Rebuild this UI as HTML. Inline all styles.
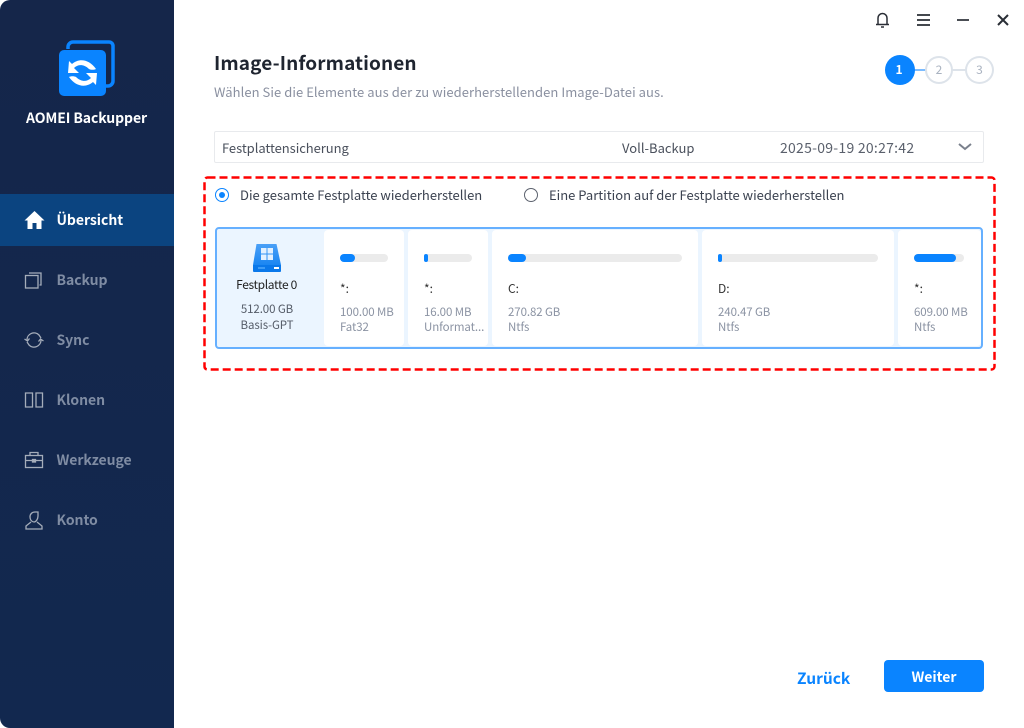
<!DOCTYPE html>
<html lang="de"><head><meta charset="utf-8"><title>AOMEI Backupper</title>
<style>
*{box-sizing:border-box;margin:0;padding:0}
html,body{width:1024px;height:728px;overflow:hidden;background:#fff}
body{position:relative;font-family:"Noto Sans CJK SC","Liberation Sans",sans-serif}
.t{position:absolute;white-space:nowrap;line-height:20px}
.a{position:absolute}
#side{position:absolute;left:0;top:0;width:174px;height:728px;background:linear-gradient(180deg,#15264a 0%,#12284f 100%);border-radius:10px 0 0 10px}
.nav{font-size:14px;font-weight:700;color:#7f8ca3;left:56.500px;letter-spacing:-.05px}
.c{position:absolute;top:230px;height:116px;background:#fff;border-radius:4px}
.b{position:absolute;top:254px;height:8px;background:#ebebeb;border-radius:4px}
.f{position:absolute;top:254px;height:8px;background:#0a84ff;border-radius:4px}
.s{font-size:11.500px;letter-spacing:-.1px;color:#8b93a3}
.k{font-size:12px;color:#333}
.g{color:#555c68;font-size:11.500px;letter-spacing:-.1px}
</style></head><body>
<div id="side"></div>
<svg class="a" style="left:56px;top:38px" width="62" height="60" viewBox="0 0 62 60">
<path d="M12 11V9a5 5 0 0 1 5-5h36a4 4 0 0 1 4 4v35a5 5 0 0 1-5 5h-2" fill="none" stroke="#0a84ff" stroke-width="3.500"/>
<rect x="3" y="12" width="47" height="46" rx="5" fill="#0a84ff"/>
<path d="M12 35 13 23l3 3c7-6 17-5 24 5-2 1-5 1-7 0-5-5-11-5-15-1l5 5z" fill="#fff"/>
<path d="M12 35 13 23l3 3c7-6 17-5 24 5-2 1-5 1-7 0-5-5-11-5-15-1l5 5z" fill="#fff" transform="rotate(180 26.500 35)"/>
</svg>
<div class="t" style="left:26px;top:108px;font-size:14px;font-weight:700;color:#fff;width:121px;text-align:center;letter-spacing:-.1px">AOMEI Backupper</div>
<div class="a" style="left:0;top:194px;width:174px;height:52px;background:#0b4480"></div>
<svg class="a" style="left:24px;top:210px" width="21" height="20" viewBox="0 0 21 20"><path d="M10.500 1 .5 10.500h3V19h5v-6h4v6h5v-8.500h3z" fill="#fff"/></svg>
<div class="t nav" style="top:210px;color:#fff">Übersicht</div>
<svg class="a" style="left:24px;top:270px" width="20" height="20" viewBox="0 0 20 20" fill="none" stroke="#a5adba" stroke-width="1.300"><rect x="1.500" y="5.500" width="12.500" height="12.500"/><path d="M5 3h12v12h-1.500M17 3v11"/></svg>
<div class="t nav" style="top:270px">Backup</div>
<svg class="a" style="left:24px;top:330px" width="20" height="20" viewBox="0 0 20 20" fill="none" stroke="#a5adba" stroke-width="1.300"><path d="M3 10a7 7 0 0 1 12-5l2 3M17 10a7 7 0 0 1-12 5l-2-3"/><path d="M.5 9l3 2 2-2.500M19.500 11l-3-2-2 2.500"/></svg>
<div class="t nav" style="top:330px">Sync</div>
<svg class="a" style="left:24px;top:390px" width="20" height="20" viewBox="0 0 20 20" fill="none" stroke="#a5adba" stroke-width="1.300"><path d="M1.500 3h7v14h-7zM12 3h6.500v14H12z"/></svg>
<div class="t nav" style="top:390px">Klonen</div>
<svg class="a" style="left:24px;top:450px" width="20" height="20" viewBox="0 0 20 20" fill="none" stroke="#a5adba" stroke-width="1.300"><rect x="1.500" y="5.500" width="17" height="12"/><path d="M6 5.500V2.500h8v3M1.500 10.500h17"/><rect x="8.500" y="9.500" width="3" height="2.500" fill="#a5adba"/></svg>
<div class="t nav" style="top:450px">Werkzeuge</div>
<svg class="a" style="left:24px;top:510px" width="20" height="20" viewBox="0 0 20 20" fill="none" stroke="#a5adba" stroke-width="1.300"><path d="M6 7c0-3 2-5 5-5h3v4c0 3-2 6-4 6s-4-2-4-5zM7 12l-5 4v3h16v-3l-5-4"/></svg>
<div class="t nav" style="top:510px">Konto</div>

<svg class="a" style="left:872px;top:10px" width="150" height="20" viewBox="0 0 150 20" fill="none" stroke="#2a2e36" stroke-width="1.500">
<path d="M4 14.500h13M6 14V8a4.500 4.500 0 0 1 9 0v6"/><path d="M9 17h3" stroke-width="1.500"/>
<path d="M45 5h13M45 10h13M45 15h13" stroke-width="1.700"/>
<path d="M85 10h12" stroke-width="1.700"/>
<path d="M126 5l10 10M136 5l-10 10" stroke-width="2"/>
</svg>

<div class="t" style="left:214px;top:51px;font-size:19px;font-weight:700;color:#1f2530;line-height:24px;letter-spacing:.1px">Image-Informationen</div>
<div class="t" style="left:214px;top:82px;font-size:13px;color:#8a90a0;letter-spacing:.06px">Wählen Sie die Elemente aus der zu wiederherstellenden Image-Datei aus.</div>

<div class="a" style="left:912px;top:69px;width:14px;height:2px;background:#7cbcff"></div>
<div class="a" style="left:952px;top:69px;width:14px;height:2px;background:#dde3ea"></div>
<div class="a" style="left:884.500px;top:55px;width:30px;height:30px;border-radius:50%;background:#0a84ff"></div>
<div class="a" style="left:925px;top:56px;width:28px;height:28px;border-radius:50%;border:2px solid #dde3ea;background:#fff"></div>
<div class="a" style="left:965px;top:56px;width:29px;height:28px;border-radius:50%;border:2px solid #dde3ea;background:#fff"></div>
<div class="t" style="left:884px;top:60px;width:30px;text-align:center;font-size:12px;font-weight:700;color:#fff">1</div>
<div class="t" style="left:925px;top:60px;width:28px;text-align:center;font-size:12px;color:#a9b2c0">2</div>
<div class="t" style="left:965px;top:60px;width:29px;text-align:center;font-size:12px;color:#a9b2c0">3</div>

<div class="a" style="left:214px;top:131px;width:770px;height:32px;border:1px solid #e8eaed;border-radius:2px"></div>
<div class="t" style="left:222px;top:138px;font-size:13px;color:#4a505c;letter-spacing:-.05px">Festplattensicherung</div>
<div class="t" style="left:622px;top:138px;font-size:13px;color:#4a505c">Voll-Backup</div>
<div class="t" style="left:780px;top:138px;font-size:14px;color:#5a606c;letter-spacing:.26px">2025-09-19 20:27:42</div>
<svg class="a" style="left:957px;top:141px" width="16" height="12" viewBox="0 0 16 12" fill="none" stroke="#7a808c" stroke-width="2"><path d="M2 3l6 5 6-5"/></svg>

<svg class="a" style="left:203px;top:176px" width="794" height="196"><rect x="1.500" y="1.500" width="790" height="192" rx="3" fill="none" stroke="#ff0000" stroke-width="2.500" stroke-dasharray="8 4"/></svg>

<div class="a" style="left:215px;top:188px;width:14px;height:14px;border-radius:50%;border:1.500px solid #0a84ff"></div>
<div class="a" style="left:219px;top:192px;width:6px;height:6px;border-radius:50%;background:#0a84ff"></div>
<div class="t" style="left:240px;top:185px;font-size:13px;color:#3b4250">Die gesamte Festplatte wiederherstellen</div>
<div class="a" style="left:524px;top:188px;width:14px;height:14px;border-radius:50%;border:1.500px solid #5c626e"></div>
<div class="t" style="left:549px;top:185px;font-size:13px;color:#3b4250">Eine Partition auf der Festplatte wiederherstellen</div>

<div class="a" style="left:215px;top:227px;width:768px;height:122px;background:#ebf5ff;border:2px solid #66b0ff;border-radius:4px"></div>
<div class="c" style="left:324px;width:80px"></div>
<div class="c" style="left:408px;width:80px"></div>
<div class="c" style="left:492px;width:206px"></div>
<div class="c" style="left:702px;width:192px"></div>
<div class="c" style="left:898px;width:83px"></div>

<svg class="a" style="left:252px;top:243px" width="30" height="30" viewBox="0 0 30 30">
<defs><linearGradient id="dk" x1="0" y1="0" x2="0" y2="1"><stop offset="0" stop-color="#4aa0f7"/><stop offset="1" stop-color="#1a86f2"/></linearGradient></defs>
<path d="M4.500 1h20L29 22H1z" fill="url(#dk)"/><path d="M1 22h28v6a1 1 0 0 1-1 1H2a1 1 0 0 1-1-1z" fill="#0a78ea"/>
<rect x="9" y="5" width="5.500" height="5.500" fill="#e2f0ff"/><rect x="15.500" y="5" width="5.500" height="5.500" fill="#e2f0ff"/><rect x="9" y="11.500" width="5.500" height="5.500" fill="#e2f0ff"/><rect x="15.500" y="11.500" width="5.500" height="5.500" fill="#e2f0ff"/>
<rect x="6" y="24" width="7" height="2" fill="#3e9cf6"/>
<rect x="22" y="24" width="5" height="2" fill="#fff"/>
</svg>
<div class="t" style="left:217px;top:275px;width:99px;text-align:center;font-size:12px;color:#222;letter-spacing:-.35px">Festplatte 0</div>
<div class="t g" style="left:217px;top:298.500px;width:100px;text-align:center">512.00 GB</div>
<div class="t g" style="left:217px;top:315px;width:100px;text-align:center">Basis-GPT</div>

<div class="b" style="left:340px;width:48px"></div><div class="f" style="left:340px;width:15px"></div>
<div class="t k" style="left:340px;top:279px">*:</div>
<div class="t s" style="left:340px;top:302px">100.00 MB</div><div class="t s" style="left:340px;top:317px">Fat32</div>

<div class="b" style="left:424px;width:48px"></div><div class="f" style="left:424px;width:4px"></div>
<div class="t k" style="left:424px;top:279px">*:</div>
<div class="t s" style="left:424px;top:302px">16.00 MB</div><div class="t s" style="left:424px;top:317px">Unformat...</div>

<div class="b" style="left:508px;width:174px"></div><div class="f" style="left:508px;width:18px"></div>
<div class="t k" style="left:508px;top:279px">C:</div>
<div class="t s" style="left:508px;top:302px">270.82 GB</div><div class="t s" style="left:508px;top:317px">Ntfs</div>

<div class="b" style="left:718px;width:160px"></div><div class="f" style="left:718px;width:4px"></div>
<div class="t k" style="left:718px;top:279px">D:</div>
<div class="t s" style="left:718px;top:302px">240.47 GB</div><div class="t s" style="left:718px;top:317px">Ntfs</div>

<div class="b" style="left:914px;width:50px"></div><div class="f" style="left:914px;width:42px"></div>
<div class="t k" style="left:914px;top:279px">*:</div>
<div class="t s" style="left:914px;top:302px">609.00 MB</div><div class="t s" style="left:914px;top:317px">Ntfs</div>

<div class="t" style="left:797px;top:667.500px;font-size:15.500px;font-weight:700;color:#0a84ff">Zurück</div>
<div class="a" style="left:884px;top:660px;width:100px;height:32px;background:#0a84ff;border-radius:4px"></div>
<div class="t" style="left:884px;top:667px;width:100px;text-align:center;font-size:14px;font-weight:700;color:#fff">Weiter</div>
</body></html>
